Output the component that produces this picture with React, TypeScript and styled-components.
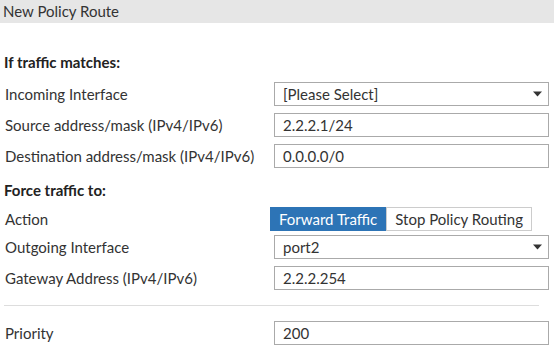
import styled, { createGlobalStyle } from 'styled-components';

const GlobalStyle = createGlobalStyle`
  body {
    margin: 0;
    background: #fff;
    font-family: Lato, "Open Sans", sans-serif;
    font-size: 15px;
    color: #333;
  }
`;

function App() {
  return (
    <>
      <GlobalStyle />
      <StyledPage>
        <StyledHeader>New Policy Route</StyledHeader>
        <StyledBody>
          <StyledSection $top={29} $height={30}>If traffic matches:</StyledSection>
          <StyledRow>
            <StyledLabel>Incoming Interface</StyledLabel>
            <StyledSelect>
              <span>[Please Select]</span>
              <Caret />
            </StyledSelect>
          </StyledRow>
          <StyledRow>
            <StyledLabel>Source address/mask (IPv4/IPv6)</StyledLabel>
            <StyledInput>2.2.2.1/24</StyledInput>
          </StyledRow>
          <StyledRow>
            <StyledLabel>Destination address/mask (IPv4/IPv6)</StyledLabel>
            <StyledInput>0.0.0.0/0</StyledInput>
          </StyledRow>
          <StyledSection $top={5} $height={27}>Force traffic to:</StyledSection>
          <StyledRow $gap={4}>
            <StyledLabel>Action</StyledLabel>
            <StyledToggle>
              <StyledToggleButton $active>Forward Traffic</StyledToggleButton>
              <StyledToggleButton>Stop Policy Routing</StyledToggleButton>
            </StyledToggle>
          </StyledRow>
          <StyledRow>
            <StyledLabel>Outgoing Interface</StyledLabel>
            <StyledSelect>
              <span>port2</span>
              <Caret />
            </StyledSelect>
          </StyledRow>
          <StyledRow $gap={0}>
            <StyledLabel>Gateway Address (IPv4/IPv6)</StyledLabel>
            <StyledInput>2.2.2.254</StyledInput>
          </StyledRow>
          <StyledDivider />
          <StyledRow>
            <StyledLabel>Priority</StyledLabel>
            <StyledInput>200</StyledInput>
          </StyledRow>
        </StyledBody>
      </StyledPage>
    </>
  );
}

function Caret() {
  return (
    <StyledCaret width="9" height="6" viewBox="0 0 9 6">
      <path d="M0 0.5 H9 L4.5 5.5 Z" fill="#333" />
    </StyledCaret>
  );
}

export default App;

const StyledPage = styled.main`
  width: 554px;
  height: 351px;
  overflow: hidden;
`;

const StyledHeader = styled.header`
  height: 23px;
  line-height: 23px;
  background: #e6e6e6;
  padding-left: 3px;
  color: #333;
`;

const StyledBody = styled.div`
  padding: 0 5px 0 4px;
  display: flex;
  flex-direction: column;
`;

const StyledSection = styled.h3<{ $top: number; $height: number }>`
  margin: ${(p) => p.$top}px 0 0;
  height: ${(p) => p.$height}px;
  line-height: 20px;
  font-size: 15px;
  font-weight: 700;
  color: #222;
`;

const StyledRow = styled.div<{ $gap?: number }>`
  display: grid;
  grid-template-columns: 266px 279px;
  align-items: center;
  height: 24px;
  margin-bottom: ${(p) => (p.$gap ?? 7)}px;
`;

const StyledLabel = styled.span`
  padding-left: 1px;
  color: #333;
  white-space: nowrap;
`;

const StyledInput = styled.div`
  box-sizing: border-box;
  height: 24px;
  margin-left: 4px;
  width: 275px;
  border: 1px solid #aaa;
  padding: 0 8px;
  line-height: 22px;
  color: #333;
`;

const StyledSelect = styled(StyledInput)`
  display: flex;
  align-items: center;
  justify-content: space-between;
  padding-right: 6px;
`;

const StyledCaret = styled.svg`
  display: block;
`;

const StyledToggle = styled.div`
  display: flex;
  height: 24px;
`;

const StyledToggleButton = styled.div<{ $active?: boolean }>`
  box-sizing: border-box;
  height: 24px;
  line-height: 22px;
  padding: 0 8px;
  border: 1px solid ${(p) => (p.$active ? '#2d74b6' : '#ccc')};
  background: ${(p) => (p.$active ? '#2d74b6' : '#fff')};
  color: ${(p) => (p.$active ? '#fff' : '#333')};
  white-space: nowrap;
`;

const StyledDivider = styled.hr`
  border: 0;
  border-top: 1px solid #ddd;
  margin: 15px 10px 15px 0;
  height: 0;
`;
